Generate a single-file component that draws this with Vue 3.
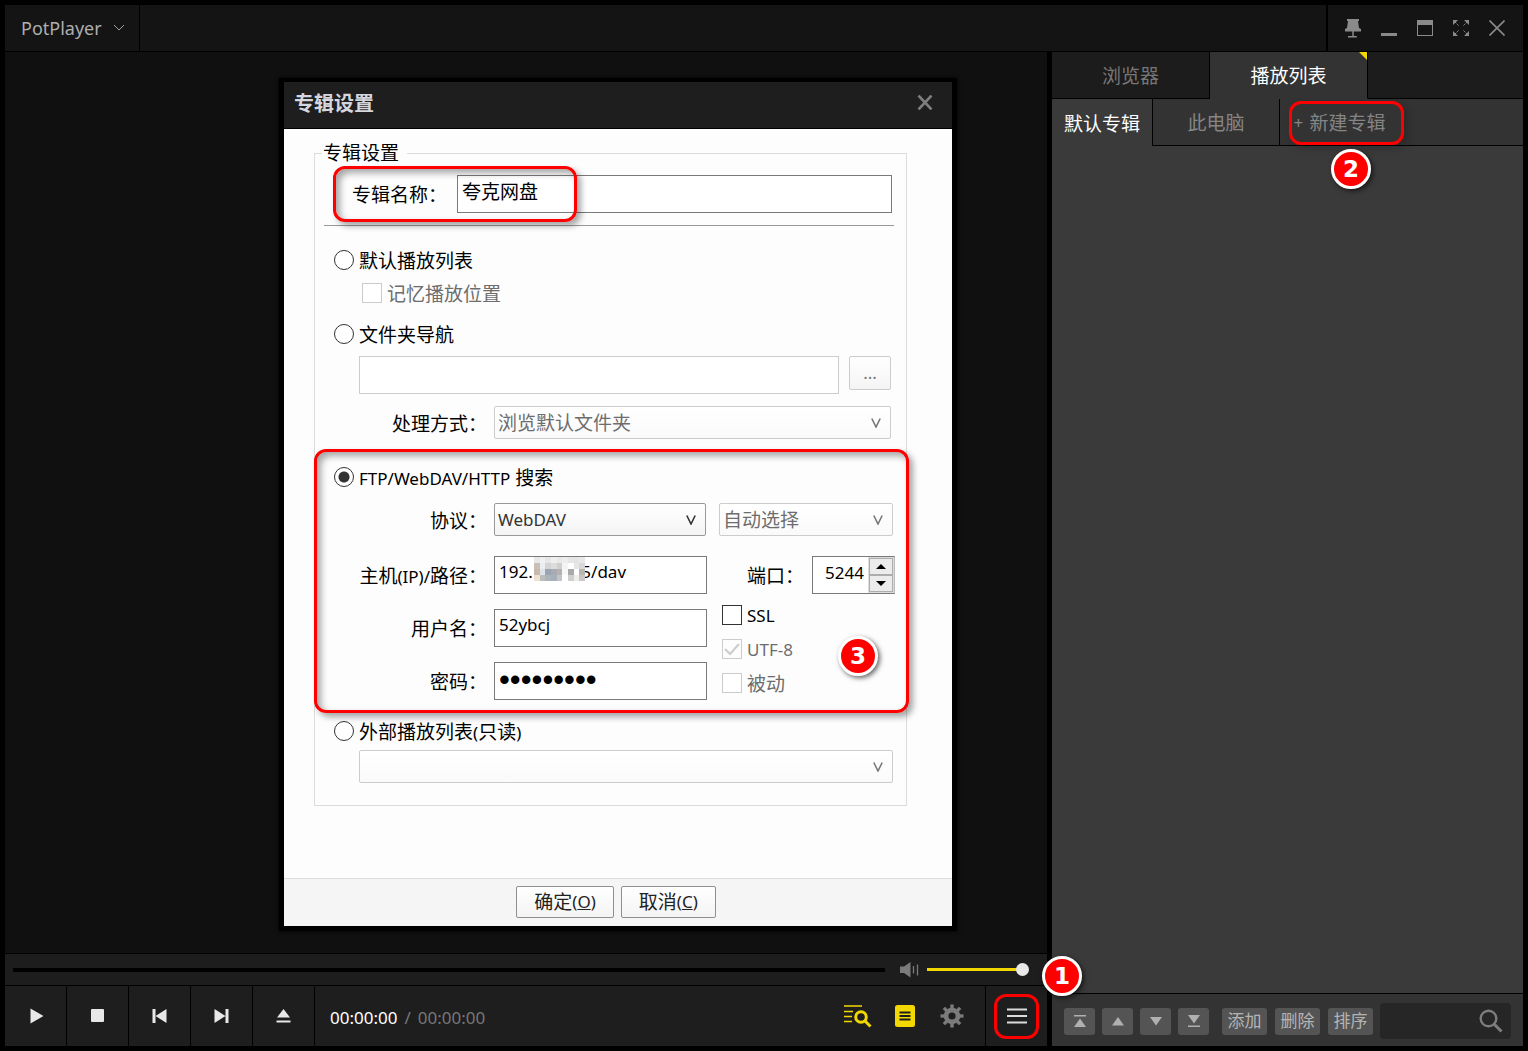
<script setup>
import { ref } from 'vue'

const sideTab = ref('playlist')
const albumName = ref('夸克网盘')
const mode = ref('ftp')
const protocol = ref('WebDAV')
const host = ref('192.           5/dav')
const port = ref('5244')
const user = ref('52ybcj')
const secret = ref('123456789')
const ssl = ref(false)

const mosaic = [
  ['#e8e8e8', '#f0f0f0', '#e6e6e6', '#efefef', '#e9e9e9', '#ededed', '#e6e6e6', '#e4e4e4', '#e8e8e8'],
  ['#cbbfb4', '#e8eef4', '#d4d4d4', '#dcdcdc', '#cfcfcf', '#f4f4f4', '#ffffff', '#e6e6e6', '#d8d8d8'],
  ['#c9b9ad', '#dfe3e8', '#9aa5b4', '#a9abb0', '#b3b3b3', '#f8f8f8', '#a9a9a9', '#ffffff', '#b9b5b3'],
  ['#efe0d2', '#bcbcbc', '#adb3bb', '#a7afba', '#c2c4c6', '#ffffff', '#cfcfcb', '#eeeeee', '#cac6c4']
]
</script>

<template>
  <div class="window">
    <header class="titlebar">
      <button class="brand" type="button">
        PotPlayer
        <svg width="12" height="8" viewBox="0 0 12 8"><path d="M1 1l5 5 5-5" fill="none" stroke="#a0a0a0" /></svg>
      </button>
      <nav class="win-buttons">
        <button type="button" aria-label="置顶">
          <svg width="16" height="19" viewBox="0 0 16 19"><path d="M2 0h12v2h-1l1 7 2 1v2.500H0V10l2-1 1-7H2zM7.300 12h1.500v5h3v1.500H3V17h4.300z" fill="#8a8a8a" /></svg>
        </button>
        <button type="button" aria-label="最小化">
          <svg width="16" height="16" viewBox="0 0 16 16"><path d="M0 13h16v3H0z" fill="#8a8a8a" /></svg>
        </button>
        <button type="button" aria-label="最大化">
          <svg width="16" height="16" viewBox="0 0 16 16"><path d="M0 0h16v16H0zM1 5v10h14V5z" fill="#8a8a8a" fill-rule="evenodd" /></svg>
        </button>
        <button type="button" aria-label="全屏">
          <svg width="16" height="16" viewBox="0 0 16 16">
            <path d="M0 0h5L0 5zM16 0v5l-5-5zM0 16v-5l5 5zM16 16h-5l5-5z" fill="#8a8a8a" />
            <path d="M2 2l4 4M14 2l-4 4M2 14l4-4M14 14l-4-4" stroke="#8a8a8a" stroke-dasharray="2 1" />
          </svg>
        </button>
        <button type="button" aria-label="关闭">
          <svg width="16" height="16" viewBox="0 0 16 16"><path d="M.5.500l15 15M15.500.500l-15 15" stroke="#8a8a8a" stroke-width="1.600" /></svg>
        </button>
      </nav>
    </header>

    <div class="content">
      <main class="player">
        <div class="stage">
          <section class="dialog" role="dialog" aria-label="专辑设置">
            <header class="dialog-head">
              <h1>专辑设置</h1>
              <button type="button" aria-label="关闭">
                <svg width="16" height="15" viewBox="0 0 16 15"><path d="M1.500.500l13 14M14.500.500l-13 14" stroke="#7e7e7e" stroke-width="2.600" /></svg>
              </button>
            </header>

            <form class="dialog-body" @submit.prevent>
              <fieldset class="group">
                <legend>专辑设置</legend>

                <div class="row name-row">
                  <label for="album">专辑名称：</label>
                  <input id="album" v-model="albumName" class="field" type="text" />
                  <span class="mark mark-name"></span>
                </div>
                <hr />

                <label class="choice gap-l"><input v-model="mode" type="radio" value="list" /><span>默认播放列表</span></label>
                <label class="choice sub off"><input type="checkbox" disabled /><span>记忆播放位置</span></label>
                <label class="choice gap-m"><input v-model="mode" type="radio" value="folder" /><span>文件夹导航</span></label>

                <div class="row folder-row">
                  <input class="field" type="text" aria-label="文件夹" disabled />
                  <button class="btn browse" type="button" disabled>...</button>
                </div>
                <div class="row handle-row">
                  <label class="tag" for="handle">处理方式：</label>
                  <span class="drop">
                    <select id="handle" disabled><option>浏览默认文件夹</option></select>
                    <svg width="10" height="10" viewBox="0 0 10 10"><path d="M.8.500L5 9 9.200.500" /></svg>
                  </span>
                </div>

                <div class="remote">
                  <span class="mark mark-remote"></span>
                  <label class="choice">
                    <input v-model="mode" type="radio" value="ftp" />
                    <span><span class="latin">FTP/WebDAV/HTTP</span> 搜索</span>
                  </label>
                  <div class="row proto-row">
                    <label class="tag" for="proto">协议：</label>
                    <span class="drop proto">
                      <select id="proto" v-model="protocol"><option>WebDAV</option><option>FTP</option><option>HTTP</option></select>
                      <svg width="10" height="10" viewBox="0 0 10 10"><path d="M.8.500L5 9 9.200.500" /></svg>
                    </span>
                    <span class="drop auto">
                      <select aria-label="编码" disabled><option>自动选择</option></select>
                      <svg width="10" height="10" viewBox="0 0 10 10"><path d="M.8.500L5 9 9.200.500" /></svg>
                    </span>
                  </div>
                  <div class="row host-row">
                    <label class="tag" for="host">主机<span class="latin">(IP)/</span>路径：</label>
                    <span class="masked">
                      <input id="host" v-model="host" class="field" type="text" />
                      <svg class="mosaic" width="51" height="24" viewBox="0 0 9 4" preserveAspectRatio="none" shape-rendering="crispEdges">
                        <template v-for="(line, y) in mosaic" :key="y">
                          <rect v-for="(c, x) in line" :key="x" :x="x" :y="y" width="1" height="1" :fill="c" />
                        </template>
                      </svg>
                    </span>
                    <label class="port-tag" for="port">端口：</label>
                    <span class="spin">
                      <input id="port" v-model="port" type="text" inputmode="numeric" />
                      <span class="steps">
                        <button type="button" aria-label="增加"><svg width="10" height="5" viewBox="0 0 10 5"><path d="M0 5l5-5 5 5z" /></svg></button>
                        <button type="button" aria-label="减少"><svg width="10" height="5" viewBox="0 0 10 5"><path d="M0 0l5 5 5-5z" /></svg></button>
                      </span>
                    </span>
                  </div>
                  <div class="login">
                    <div class="creds">
                      <div class="row">
                        <label class="tag" for="user">用户名：</label>
                        <input id="user" v-model="user" class="field" type="text" />
                      </div>
                      <div class="row">
                        <label class="tag" for="secret">密码：</label>
                        <input id="secret" v-model="secret" class="field" type="password" />
                      </div>
                    </div>
                    <div class="flags">
                      <label class="choice"><input v-model="ssl" type="checkbox" /><span class="latin">SSL</span></label>
                      <label class="choice off"><input type="checkbox" checked disabled /><span class="latin">UTF-8</span></label>
                      <label class="choice off"><input type="checkbox" disabled /><span>被动</span></label>
                    </div>
                  </div>
                  <span class="badge badge-3">3</span>
                </div>

                <label class="choice outer-choice">
                  <input v-model="mode" type="radio" value="outer" />
                  <span>外部播放列表<span class="latin">(</span>只读<span class="latin">)</span></span>
                </label>
                <div class="row outer-row">
                  <span class="drop">
                    <select aria-label="外部播放列表" disabled><option></option></select>
                    <svg width="10" height="10" viewBox="0 0 10 10"><path d="M.8.500L5 9 9.200.500" /></svg>
                  </span>
                </div>
              </fieldset>
            </form>

            <footer class="dialog-foot">
              <button class="btn" type="button">确定<span class="latin">(<u>O</u>)</span></button>
              <button class="btn" type="button">取消<span class="latin">(<u>C</u>)</span></button>
            </footer>
          </section>
        </div>

        <div class="seek">
          <div class="track"></div>
          <svg class="speaker" width="19" height="16" viewBox="0 0 19 16">
            <path d="M0 4.500h4L10.500 0v15.500L4 11H0z" fill="#7b7b7b" />
            <path d="M13.500 4v7.500M17.500 2.500v11" stroke="#7b7b7b" stroke-width="1.300" />
          </svg>
          <div class="volume"><span class="knob"></span></div>
        </div>

        <div class="controls">
          <button class="ctl" type="button" aria-label="播放"><svg width="20" height="20" viewBox="0 0 20 20"><path d="M4.500 2.500L17.500 10l-13 7.500z" /></svg></button>
          <button class="ctl" type="button" aria-label="停止"><svg width="20" height="20" viewBox="0 0 20 20"><rect x="3" y="3" width="13" height="13" rx="1" /></svg></button>
          <button class="ctl" type="button" aria-label="上一个"><svg width="20" height="20" viewBox="0 0 20 20"><path d="M2.500 3h3v14h-3zM16.500 3v14l-11-7z" /></svg></button>
          <button class="ctl" type="button" aria-label="下一个"><svg width="20" height="20" viewBox="0 0 20 20"><path d="M13.500 3h3v14h-3zM2.500 3v14l11-7z" /></svg></button>
          <button class="ctl" type="button" aria-label="打开"><svg width="20" height="20" viewBox="0 0 20 20"><path d="M9.500 3l6.500 8.500H3zM2.500 14.500h14v2h-14z" /></svg></button>
          <div class="time"><span class="now">00:00:00</span><span>/</span><span>00:00:00</span></div>
          <div class="tools">
            <button type="button" aria-label="搜索">
              <svg width="28" height="24" viewBox="0 0 28 24">
                <path d="M0 2h18M0 7.500h9M0 12.500h8M0 17.500h8" stroke="#f2d800" stroke-width="1.500" />
                <circle cx="17" cy="13" r="5.300" fill="none" stroke="#f2d800" stroke-width="3" />
                <path d="M21 17l5.500 5.500" stroke="#f2d800" stroke-width="3" />
              </svg>
            </button>
            <button type="button" aria-label="列表">
              <svg width="20" height="22" viewBox="0 0 20 22">
                <rect width="20" height="22" rx="2.500" fill="#f2d800" />
                <path d="M4.500 7.500h11M4.500 11h11M4.500 14.500h11" stroke="#1c1c1c" stroke-width="1.800" />
              </svg>
            </button>
            <button type="button" aria-label="设置">
              <svg width="24" height="24" viewBox="0 0 24 24">
                <g fill="#7b7b7b">
                  <rect v-for="a in [0, 45, 90, 135]" :key="a" x="10.300" y="0.500" width="3.400" height="23" :transform="`rotate(${a} 12 12)`" />
                  <circle cx="12" cy="12" r="8.300" />
                </g>
                <circle cx="12" cy="12" r="3.600" fill="#1e1e1e" />
              </svg>
            </button>
          </div>
          <div class="menu">
            <button type="button" aria-label="菜单">
              <svg width="20" height="16" viewBox="0 0 20 16"><path d="M0 1.500h20M0 8h20M0 14.500h20" stroke="#dcdcdc" stroke-width="2" /></svg>
            </button>
            <span class="badge badge-1">1</span>
          </div>
        </div>
      </main>

      <aside class="side">
        <nav class="tabs">
          <button type="button" :class="{ on: sideTab === 'browser' }" @click="sideTab = 'browser'">浏览器</button>
          <button type="button" :class="{ on: sideTab === 'playlist' }" @click="sideTab = 'playlist'">播放列表</button>
          <span class="rest"></span>
        </nav>
        <nav class="albums">
          <button class="current" type="button">默认专辑</button>
          <button class="pc" type="button">此电脑</button>
          <span class="rest">
            <button class="add" type="button"><span class="plus">+</span>新建专辑</button>
            <span class="badge badge-2">2</span>
          </span>
        </nav>
        <div class="list"></div>
        <footer class="side-foot">
          <button class="mv" type="button" aria-label="置顶"><svg width="12" height="12" viewBox="0 0 12 12"><path d="M0 0h12v1.500H0zM6 3.500l6 8.500H0z" /></svg></button>
          <button class="mv" type="button" aria-label="上移"><svg width="12" height="12" viewBox="0 0 12 12"><path d="M6 2l6 8.500H0z" /></svg></button>
          <button class="mv" type="button" aria-label="下移"><svg width="12" height="12" viewBox="0 0 12 12"><path d="M6 10.500L12 2H0z" /></svg></button>
          <button class="mv" type="button" aria-label="置底"><svg width="12" height="12" viewBox="0 0 12 12"><path d="M0 10.500h12V12H0zM6 8.500L12 0H0z" /></svg></button>
          <div class="acts">
            <button class="act" type="button">添加</button>
            <button class="act" type="button">删除</button>
            <button class="act" type="button">排序</button>
          </div>
          <label class="search">
            <input type="text" aria-label="搜索" />
            <svg width="24" height="24" viewBox="0 0 24 24"><circle cx="9.500" cy="9.500" r="7.800" fill="none" stroke="#7d7d7d" stroke-width="2.400" /><path d="M15 15l7.500 7.500" stroke="#7d7d7d" stroke-width="3" /></svg>
          </label>
        </footer>
      </aside>
    </div>
  </div>
</template>

<style>
body {
  background: #000;
}
</style>

<style scoped>
* {
  box-sizing: border-box;
}
.window {
  display: flex;
  flex-direction: column;
  min-height: 100vh;
  padding: 5px;
  background: #000;
  font-family: "Noto Sans", "Noto Sans CJK SC", sans-serif;
  font-size: 19px;
  line-height: 28px;
}
button,
input,
select {
  margin: 0;
  padding: 0;
  border: 0;
  background: none;
  font: inherit;
  color: inherit;
  outline: none;
}
svg {
  display: block;
}
button {
  display: flex;
  align-items: center;
  justify-content: center;
  white-space: nowrap;
}
.latin {
  font-size: 17px;
}

/* title bar */
.titlebar {
  display: flex;
  justify-content: space-between;
  height: 47px;
  border-bottom: 1px solid #000;
  background: #141414;
}
.brand {
  gap: 11px;
  padding: 0 14px 0 16px;
  border-right: 1px solid #000;
  color: #aeaeae;
  font-size: 18px;
}
.win-buttons {
  display: flex;
  padding: 0 8px 0 7px;
  border-left: 2px solid #000;
}
.win-buttons button {
  width: 36px;
}

/* layout */
.content {
  flex: 1;
  display: grid;
  grid-template-columns: minmax(0, 1fr) 471px;
  column-gap: 5px;
}
.player {
  display: flex;
  flex-direction: column;
}
.stage {
  flex: 1;
  padding: 26px 0 22px 274px;
  background: #101010;
}

/* dialog */
.dialog {
  width: 678px;
  max-width: 100%;
  border: 5px solid #000;
  border-top-width: 4px;
  background: #fdfdfd;
  color: #000;
  box-shadow: 0 0 4px #000;
}
.dialog-head {
  display: flex;
  align-items: center;
  justify-content: space-between;
  height: 47px;
  padding: 0 19px 6px 10px;
  border-bottom: 1px solid #000;
  background: #1e1e1e;
}
.dialog-head h1 {
  margin: 0;
  padding-top: 4px;
  color: #d6d6de;
  font-size: 20px;
  font-weight: 700;
}
.dialog-body {
  padding: 11px 45px 72px 30px;
}
.group {
  min-width: 0;
  margin: 0;
  padding: 0 13px 22px 19px;
  border: 1px solid #dcdcdc;
}
.group legend {
  margin-left: -12px;
  padding: 0 8px 0 1px;
  line-height: 26px;
}
.row {
  display: flex;
  align-items: center;
}
.row label {
  padding-top: 2px;
  white-space: nowrap;
}
.tag {
  width: 153px;
  margin-right: 7px;
  text-align: right;
}
.field {
  flex: 1;
  min-width: 0;
  height: 38px;
  padding: 0 4px 7px;
  border: 1px solid #7a7a7a;
  background: #fff;
}
.field:disabled {
  border-color: #ccc;
}
.name-row {
  position: relative;
  margin: 9px 1px 0 18px;
}
.name-row label {
  width: 105px;
}
hr {
  height: 1px;
  margin: 12px -1px 0 -10px;
  border: 0;
  background: #999;
}
.choice {
  display: flex;
  align-items: center;
  gap: 5px;
  height: 28px;
}
.choice > span {
  padding-top: 2px;
}
.choice input {
  appearance: none;
  flex: none;
  width: 20px;
  height: 20px;
  border: 1px solid #333;
  background: #fff;
}
.choice input[type="radio"] {
  border-radius: 50%;
}
.choice input[type="radio"]:checked {
  background: radial-gradient(circle, #333 5px, #fff 6px);
}
.choice input:disabled {
  border-color: #ccc;
}
.choice input[type="checkbox"]:checked {
  background: url("data:image/svg+xml,%3Csvg xmlns='http://www.w3.org/2000/svg' width='18' height='18'%3E%3Cpath d='M2 9l5 5 9-10' fill='none' stroke='%23ccc' stroke-width='2'/%3E%3C/svg%3E") center no-repeat;
}
.off {
  color: #6d6d6d;
}
.gap-l {
  margin-top: 20px;
}
.gap-m {
  margin-top: 13px;
}
.sub {
  margin: 5px 0 0 28px;
}
.folder-row {
  align-items: flex-start;
  gap: 10px;
  margin: 8px 2px 0 25px;
}
.btn {
  height: 32px;
  padding: 0 17px;
  border: 1px solid #8f8f8f;
  border-radius: 2px;
  background: linear-gradient(#fff, #f4f4f4);
  color: #222;
}
.browse {
  width: 42px;
  height: 34px;
  padding: 0;
  border-color: #ccc;
  color: #777;
  font-size: 17px;
}
.handle-row {
  margin: 12px 2px 0 0;
}
.drop {
  position: relative;
  display: flex;
  flex: 1;
}
.drop select {
  appearance: none;
  width: 100%;
  height: 33px;
  padding: 0 30px 0 3px;
  border: 1px solid #999;
  border-radius: 2px;
  background: linear-gradient(#fff, #f4f4f4);
  color: #333;
}
.drop select:disabled {
  border-color: #ccc;
  background: linear-gradient(#fff, #fafafa);
  color: #6d6d6d;
  opacity: 1;
}
.drop svg {
  position: absolute;
  top: 12px;
  right: 10px;
  fill: none;
  stroke: #333;
  stroke-width: 1.600;
  pointer-events: none;
}
.drop select:disabled + svg {
  stroke: #777;
}

/* remote source */
.remote {
  position: relative;
  margin-top: 24px;
}
.proto-row {
  margin-top: 12px;
}
.drop.proto select {
  font-size: 17px;
}
.drop.proto {
  flex: none;
  width: 212px;
}
.auto {
  margin-left: 13px;
}
.host-row {
  margin: 20px -2px 0 0;
}
.masked {
  position: relative;
  display: flex;
  width: 213px;
}
.masked .field,
.creds .field,
.spin input {
  font-size: 17px;
}
.mosaic {
  position: absolute;
  top: 1px;
  left: 40px;
}
.port-tag {
  flex: 1;
  padding-right: 8px;
  text-align: right;
}
.spin {
  display: flex;
  width: 83px;
  height: 38px;
  border: 1px solid #7a7a7a;
  border-right-color: #bbb;
  background: #fff;
}
.spin input {
  flex: 1;
  min-width: 0;
  padding: 0 4px 4px 0;
  text-align: right;
}
.steps {
  display: flex;
  flex-direction: column;
  width: 26px;
  padding: 1px;
  background: #ddd;
}
.steps button {
  flex: 1;
  border: 1px solid #adadad;
  background: #ececec;
}
.login {
  display: flex;
  justify-content: space-between;
  margin-top: 7px;
}
.creds {
  display: flex;
  flex-direction: column;
  gap: 15px;
  width: 373px;
  padding-top: 8px;
}
.creds input[type="password"] {
  padding-bottom: 2px;
  font-family: "Liberation Sans", sans-serif;
  font-size: 31px;
}
.flags {
  display: flex;
  flex-direction: column;
  gap: 6px;
  width: 171px;
}
.outer-choice {
  margin-top: 17px;
}
.outer-row {
  margin: 5px 0 0 25px;
}
.dialog-foot {
  display: flex;
  justify-content: center;
  gap: 7px;
  height: 48px;
  padding: 7px 4px 0 0;
  border-top: 1px solid #dedede;
  background: #f5f5f5;
}

/* callouts */
.mark {
  position: absolute;
  border: 3px solid #f00;
  border-radius: 12px;
  box-shadow: 4px 4px 6px rgba(0, 0, 0, 0.35), inset 4px 4px 7px rgba(0, 0, 0, 0.35);
  pointer-events: none;
}
.mark-name {
  top: -9px;
  left: -19px;
  width: 244px;
  height: 56px;
}
.mark-remote {
  inset: -14px -16px -13px -20px;
}
.badge {
  position: absolute;
  z-index: 2;
  display: flex;
  align-items: center;
  justify-content: center;
  width: 40px;
  height: 40px;
  border: 3px solid #fff;
  border-radius: 50%;
  background: #f00;
  color: #fff;
  font-family: "DejaVu Sans", sans-serif;
  font-size: 23px;
  font-weight: 700;
  line-height: 34px;
  box-shadow: 2px 2px 5px rgba(0, 0, 0, 0.6);
}
.badge-1 {
  top: -30px;
  left: 56px;
}
.badge-2 {
  top: 50px;
  left: 51px;
}
.badge-3 {
  top: 173px;
  right: 15px;
}

/* seek bar */
.seek {
  display: flex;
  align-items: center;
  height: 32px;
  padding: 0 19px 0 8px;
  border-top: 1px solid #000;
  background: #1d1d1d;
}
.track {
  flex: 1;
  height: 4px;
  background: #000;
}
.speaker {
  margin: 0 8px 0 15px;
}
.volume {
  position: relative;
  width: 101px;
  height: 3px;
  background: #f2d800;
}
.knob {
  position: absolute;
  top: -5px;
  right: -1px;
  width: 13px;
  height: 13px;
  border-radius: 50%;
  background: #e8e8e8;
}

/* transport */
.controls {
  display: flex;
  height: 61px;
  border-top: 1px solid #000;
  background: #1e1e1e;
}
.ctl {
  width: 62px;
  border-right: 1px solid #000;
}
.ctl svg {
  fill: #e8e8e8;
}
.time {
  display: flex;
  flex: 1;
  align-items: center;
  gap: 7px;
  padding: 3px 0 0 15px;
  color: #777;
  font-size: 17px;
}
.now {
  color: #fff;
}
.tools {
  display: flex;
  padding-right: 10px;
}
.tools button {
  width: 47px;
}
.menu {
  position: relative;
  display: flex;
  align-items: center;
  width: 62px;
  padding-left: 8px;
  border-left: 1px solid #000;
}
.menu button {
  width: 45px;
  height: 45px;
  border: 3px solid #f00;
  border-radius: 12px;
}

/* side panel */
.side {
  display: flex;
  flex-direction: column;
  min-width: 0;
  background: #3a3a3a;
}
.tabs,
.albums {
  display: flex;
  height: 47px;
}
.tabs button,
.albums button {
  padding-top: 2px;
}
.tabs button {
  position: relative;
  width: 158px;
  border-right: 1px solid #000;
  border-bottom: 1px solid #000;
  background: #1c1c1c;
  color: #777;
}
.tabs .on {
  border-bottom-color: #333;
  background: #333;
  color: #fff;
}
.tabs .on::after {
  position: absolute;
  top: 0;
  right: 0;
  border: 4px solid #f2d800;
  border-bottom-color: transparent;
  border-left-color: transparent;
  content: "";
}
.rest {
  flex: 1;
  border-bottom: 1px solid #000;
}
.tabs .rest {
  background: #1c1c1c;
}
.albums {
  background: #333;
}
.albums .current {
  width: 101px;
  border-right: 1px solid #000;
  background: #3a3a3a;
  color: #fff;
}
.albums .pc {
  width: 127px;
  border-right: 1px solid #000;
  border-bottom: 1px solid #000;
  color: #858585;
}
.albums .rest {
  position: relative;
  padding: 2px 0 0 9px;
}
.albums .add {
  gap: 6px;
  width: 115px;
  height: 44px;
  padding: 0 14px 0 0;
  border: 3px solid #f00;
  border-radius: 12px;
  color: #858585;
  box-shadow: 3px 3px 8px rgba(0, 0, 0, 0.2);
}
.plus {
  width: 10px;
  font-size: 17px;
}
.list {
  flex: 1;
}
.side-foot {
  display: flex;
  align-items: center;
  gap: 7px;
  height: 53px;
  padding: 2px 12px 0;
  border-top: 1px solid #000;
  background: #333;
}
.mv,
.act {
  flex: none;
  height: 27px;
  border-radius: 3px;
  background: #545454;
}
.mv {
  width: 31px;
}
.mv svg {
  fill: #b0b0b0;
}
.acts {
  display: flex;
  gap: 8px;
  padding-left: 6px;
}
.act {
  width: 45px;
  color: #b4b4b4;
  font-size: 17px;
}
.search {
  display: flex;
  flex: 1;
  align-items: center;
  min-width: 0;
  height: 36px;
  padding-right: 8px;
  border-radius: 4px;
  background: #262626;
}
.search input {
  flex: 1;
  min-width: 0;
}
.search svg {
  flex: none;
}
</style>
